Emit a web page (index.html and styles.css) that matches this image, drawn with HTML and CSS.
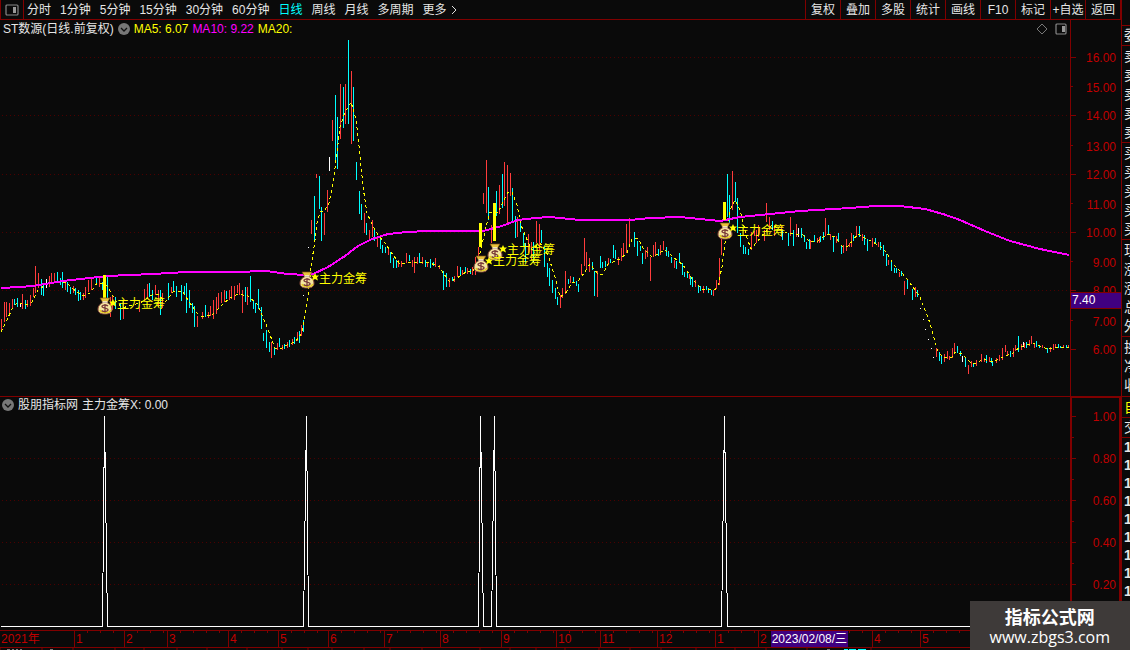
FILE: index.html
```html
<!DOCTYPE html>
<html lang="zh-CN">
<head>
<meta charset="utf-8">
<title>ST数源 日线</title>
<link rel="stylesheet" href="styles.css">
</head>
<body>
<div class="terminal">
  <main class="main">
    <header class="topbar">
      <button class="layout-btn" aria-label="布局"><svg width="14" height="12" viewBox="0 0 14 12"><rect x="1" y="1" width="12" height="10" rx="1" fill="none" stroke="#888" stroke-width="1.2"/><rect x="8" y="3" width="3" height="6" fill="#999"/></svg></button>
      <nav class="periods">
        <button>分时</button><button>1分钟</button><button>5分钟</button><button>15分钟</button><button>30分钟</button><button>60分钟</button><button class="active">日线</button><button>周线</button><button>月线</button><button>多周期</button><button class="more">更多<svg width="7" height="10" viewBox="0 0 7 10"><path d="M1 1l4 4-4 4" fill="none" stroke="#ddd"/></svg></button>
      </nav>
      <nav class="tools">
        <button>复权</button><button>叠加</button><button>多股</button><button>统计</button><button>画线</button><button>F10</button><button>标记</button><button>+自选</button><button>返回</button>
      </nav>
    </header>

    <section class="panel">
      <div class="panel-head price-head">
        <div class="legend">
          <span>ST数源(日线.前复权)</span>
          <button class="fold" aria-label="展开"><svg width="12" height="12" viewBox="0 0 12 12"><circle cx="6" cy="6" r="6" fill="#777"/><path d="M3 5l3 3 3-3" fill="none" stroke="#111" stroke-width="1.3"/></svg></button>
          <span class="yellow">MA5: 6.07</span>
          <span class="magenta">MA10: 9.22</span>
          <span class="yellow">MA20:</span>
          <span class="head-icons">
            <svg width="12" height="12" viewBox="0 0 12 12"><path d="M6 1l5 5-5 5-5-5z" fill="none" stroke="#777"/></svg>
            <svg width="12" height="12" viewBox="0 0 12 12"><rect x="1" y="1" width="10" height="10" rx="1" fill="none" stroke="#888" stroke-width="1.2"/><rect x="7" y="3" width="3" height="6" fill="#999"/></svg>
          </span>
        </div>
        <div class="axis-stub"></div>
      </div>
      <svg class="chart" viewBox="0 38 1121 358" role="img" aria-label="K线图">
        <defs>
          <g id="bag">
            <path d="M-5-8h10l-3 5h-4z" fill="#e8c23c" stroke="#7a4a12" stroke-width=".7"/>
            <path d="M-2-3.500C-5-2-7 0-7 3 -7 7-4 8 0 8S7 7 7 3C7 0 5-2 2-3.500z" fill="#f5e6a0" stroke="#8a4b3a"/>
            <path d="M-5 4C-4 7 4 8 6 4" fill="none" stroke="#e6d020" stroke-width="1.500"/>
            <path d="M-2.500-4h5" stroke="#fff" stroke-width="1.200"/>
            <path d="M3 0C1-1.500-3-1.300-3 .6S3 1.800 3 3.700-1.500 6-3.300 4.400M0-2V6.500" fill="none" stroke="#7b3b3b" stroke-width="1.300"/>
            <path d="M8-7l1.200 2.600L12-4.500 10-2.500 11 .5 8-1 5 .5 6-2.500 4-4.500l2.800.1z" fill="#ff0"/>
          </g>
        </defs>
        <g class="grid"><path d="M2 57.500H1070M2 115.500H1070M2 174.500H1070M2 232.500H1070M2 290.500H1070M2 349.500H1070"/></g>
        <path class="candle up" d="M1 319V332M4 302V322M6 302V317M9 303V314M12 299V308M22 294V309M27 300V307M30 295V306M33 288V297M35 266V293M38 273V288M49 276V287M51 273V283M54 273V283M65 280V290M73 286V293M83 293V300M85 287V298M88 280V292M91 279V290M99 277V287M110 297V317M112 295V310M123 300V319M139 302V312M144 289V300M147 284V297M155 285V295M158 290V307M162 293V308M171 287V293M197 316V327M202 312V319M208 312V318M210 306V316M213 300V319M216 297V314M218 293V308M221 292V303M224 290V302M229 290V300M231 286V299M234 286V300M237 285V293M239 283V295M242 290V313M247 287V305M271 342V358M277 343V350M282 345V350M287 342V348M292 339V345M297 332V341M301 325V336M311 220V234M316 174V178M324 213V235M327 190V212M332 120V141M340 84V139M345 84V124M351 71V144M364 213V233M369 230V239M372 220V237M377 237V247M388 247V255M398 260V267M401 261V267M406 253V263M412 260V267M414 257V273M417 257V264M422 257V264M427 262V267M435 258V267M439 265V269M449 278V287M454 276V282M457 266V277M462 270V275M467 268V274M472 267V275M475 257V275M478 247V256M483 193V204M486 160V213M491 225V243M499 185V214M504 162V206M507 165V223M510 173V196M517 217V237M528 234V253M531 242V260M536 221V243M539 224V250M560 295V308M562 288V298M565 271V294M570 276V283M581 264V275M584 238V266M586 252V270M589 258V272M597 271V297M608 258V265M618 257V265M621 248V261M623 243V256M626 224V253M629 218V247M645 250V259M647 247V257M650 257V281M653 245V257M655 242V255M660 245V255M663 241V250M674 260V268M689 274V279M695 280V287M703 286V293M713 290V296M716 280V289M719 258V285M721 238V255M732 171V210M751 232V250M754 231V236M756 230V243M758 225V237M764 230V241M766 203V222M769 217V230M774 225V236M781 226V237M790 217V236M796 224V237M810 240V249M817 238V243M819 237V243M825 218V236M830 234V240M836 236V243M843 245V253M846 239V251M849 243V247M851 233V247M856 226V237M862 234V241M872 238V247M878 242V247M888 260V265M899 272V277M904 281V295M915 287V297M936 348V357M944 354V362M947 351V359M949 356V360M952 348V358M954 343V352M968 365V374M971 361V367M976 360V366M981 354V362M984 358V362M989 357V362M996 358V363M999 355V361M1002 348V360M1005 345V352M1007 351V356M1013 348V357M1015 345V351M1021 344V350M1024 343V348M1029 340V346M1031 336V344M1034 343V348M1042 345V348M1050 347V352M1053 344V350M1055 344V348M1063 345V348M1068 345V348"/>
        <path class="candle down" d="M14 299V305M17 298V307M25 300V309M41 279V295M43 283V296M57 272V282M60 278V285M62 272V288M67 282V292M70 287V294M75 288V295M78 290V301M80 292V300M96 278V285M102 282V290M107 277V298M115 297V309M120 303V320M149 283V297M152 290V300M160 290V315M168 283V300M173 281V292M176 286V297M181 285V301M184 286V295M186 283V313M189 290V308M192 303V313M194 306V327M205 305V317M226 291V299M245 287V302M250 276V302M253 300V309M255 303V313M258 289V309M261 307V329M263 333V341M266 330V348M269 342V352M274 347V355M279 338V347M284 344V349M289 340V347M294 337V344M299 331V343M303 320V332M314 196V242M319 176V209M321 207V241M335 95V160M337 117V169M343 87V128M348 40V124M353 87V141M356 162V180M359 191V214M361 204V220M366 223V235M374 229V241M380 236V249M382 245V253M385 247V253M390 252V263M393 258V268M396 260V268M409 255V261M419 253V263M425 260V267M430 259V268M433 262V266M443 271V290M446 273V287M452 277V281M460 267V276M465 267V273M470 269V274M488 187V220M496 191V216M502 174V208M512 188V221M515 216V238M520 219V232M523 233V247M525 243V263M533 242V262M541 230V243M544 247V267M547 263V277M549 268V286M552 280V293M555 288V299M557 297V305M568 279V284M573 277V282M576 281V286M578 284V292M592 262V270M594 271V296M600 256V268M602 262V268M605 261V267M610 259V263M613 245V258M615 250V259M634 232V247M637 241V256M640 246V251M642 253V264M658 249V256M666 247V256M668 251V257M671 257V263M676 261V269M679 253V262M682 263V275M684 272V277M687 271V278M690 277V285M692 277V287M698 286V293M700 286V291M706 286V290M708 288V293M711 290V295M727 174V217M729 195V223M735 182V202M737 198V233M740 233V247M743 245V254M745 247V254M748 249V255M772 221V230M782 230V240M788 233V246M793 230V246M801 228V238M804 235V242M806 242V249M809 239V249M814 235V242M820 236V242M823 232V240M828 225V235M833 237V252M838 233V242M841 245V254M853 235V241M859 226V237M864 235V245M867 239V251M875 238V244M880 242V250M883 245V256M886 254V266M891 260V271M894 268V273M896 268V273M901 271V276M907 280V289M912 289V300M917 290V297M939 352V361M941 355V364M957 346V353M960 351V356M965 357V367M973 364V367M986 355V363M991 358V363M992 361V366M1010 351V357M1018 336V352M1026 342V348M1036 341V347M1039 345V348M1047 348V353M1058 344V348M1060 346V348M1066 345V348"/>
        <path class="candle flat" d="M20 303V307M46 279V288M329 157V171M798 228V237M308 247V248M303 295V296M920 308V309M923 319V320M925 329V330M928 339V340M931 348V349M933 357V358M962 356V362M1023 342V347"/>
        <polyline class="ma-fast" points="1,332 7,320 13,307 17,303 27,305 32,302 38,290 47,284 58,281 67,283 73,289 83,296 90,293 97,283 103,283 108,287 115,300 122,308 140,303 152,295 158,294 165,302 173,292 182,291 190,303 197,313 202,317 212,315 220,307 230,298 238,294 248,296 258,305 267,327 275,348 282,348 287,345 295,342 302,333 308,297 311,267 315,240 317,223 320,212 325,210 329,203 333,183 337,153 340,127 345,112 351,102 356,119 360,155 363,187 367,213 372,224 378,235 385,243 393,255 400,264 407,263 417,262 430,263 440,267 443,273 450,282 462,275 467,271 472,272 475,268 480,253 487,223 490,212 498,213 503,202 508,192 512,192 517,205 521,225 528,242 532,250 540,243 548,255 555,277 560,297 565,294 572,283 578,281 585,272 590,264 598,274 603,274 608,264 620,259 627,253 632,239 638,238 643,248 652,257 665,250 673,257 683,265 693,280 702,289 715,290 718,285 722,267 725,243 727,227 730,210 735,200 740,210 743,222 747,238 751,249 757,242 765,232 772,225 787,233 803,235 810,242 818,241 827,234 835,237 842,246 848,246 858,234 867,239 880,246 887,253 893,264 902,273 910,283 920,297 928,318 930,323 935,342 938,352 943,357 952,357 955,352 962,354 970,362 976,364 983,359 993,362 1003,357 1013,353 1020,347 1033,343 1047,349 1060,347 1069,347"/>
        <polyline class="ma-slow" points="1,288 20,287 33,286 63,281 90,278 107,276 153,274 187,272 233,272 267,271 287,274 306,275 313,274 328,267 345,256 358,246 372,239 388,234 407,232 428,231 483,231 502,226 518,220 535,218 550,217 580,220 630,220 650,218 680,217 700,219 720,221 740,217 760,215 800,211 850,208 875,206 900,206 925,209 943,214 960,220 985,231 1010,241 1040,249 1069,255"/>
        <path class="signal" d="M104.500 275V298M480.500 223V247M494.500 203V241M724.500 202V220"/>
        <use href="#bag" x="105" y="306"/><use href="#bag" x="307" y="280"/><use href="#bag" x="495" y="252"/><use href="#bag" x="481" y="264"/><use href="#bag" x="725" y="231"/>
        <g class="signal-text">
          <text x="117" y="308">主力金筹</text><text x="319" y="283">主力金筹</text><text x="507" y="254">主力金筹</text><text x="493" y="265">主力金筹</text><text x="737" y="235">主力金筹</text>
        </g>
        <path class="rule" d="M1070.500 38V396M1071 57.500h5M1071 86.500h2M1071 115.500h5M1071 145.500h2M1071 174.500h5M1071 203.500h2M1071 232.500h5M1071 261.500h2M1071 290.500h5M1071 320.500h2M1071 349.500h5"/>
        <g class="scale">
          <text x="1116" y="62">16.00</text><text x="1116" y="92">15.00</text><text x="1116" y="120">14.00</text><text x="1116" y="151">13.00</text><text x="1116" y="179">12.00</text><text x="1116" y="209">11.00</text><text x="1116" y="237">10.00</text><text x="1116" y="267">9.00</text><text x="1116" y="295">8.00</text><text x="1116" y="326">7.00</text><text x="1116" y="354">6.00</text>
        </g>
        <rect x="1071" y="292" width="50" height="17" fill="#400080"/>
        <path class="rule" d="M1071 292.500h50M1071 308.500h50"/>
        <text class="cursor-price" x="1072" y="304">7.40</text>
      </svg>
    </section>

    <section class="panel lower">
      <div class="panel-head">
        <div class="legend">
          <button class="fold" aria-label="展开"><svg width="12" height="12" viewBox="0 0 12 12"><circle cx="6" cy="6" r="6" fill="#777"/><path d="M3 5l3 3 3-3" fill="none" stroke="#111" stroke-width="1.3"/></svg></button>
          <span>股朋指标网</span>
          <span>主力金筹X: 0.00</span>
        </div>
        <div class="axis-stub thick"></div>
      </div>
      <svg class="chart" viewBox="0 413 1121 217" role="img" aria-label="主力金筹指标">
        <g class="grid"><path d="M2 458.500H1070M2 500.500H1070M2 542.500H1070M2 584.500H1070"/></g>
        <path class="spikes" d="M1 626.500H102.500L104.500 416.500L107.500 626.500H303.500L306.500 416.500L308.500 626.500H478.500L480.500 416.500L483.500 626.500H491.500L494.500 416.500L496.500 626.500H721.500L724.500 416.500L727.500 626.500H1070"/>
        <path class="rule" d="M1072 416.500h4M1072 437.500h2M1072 458.500h4M1072 479.500h2M1072 500.500h4M1072 521.500h2M1072 542.500h4M1072 563.500h2M1072 584.500h4"/>
        <path class="rule wide" d="M1071 413V630M1120 413V630"/>
        <g class="scale">
          <text x="1116" y="421">1.00</text><text x="1116" y="463">0.80</text><text x="1116" y="505">0.60</text><text x="1116" y="547">0.40</text><text x="1116" y="589">0.20</text>
        </g>
      </svg>
    </section>

    <div class="months">
      <span class="year">2021年</span><span>1</span><span>2</span><span>3</span><span>4</span><span>5</span><span>6</span><span>7</span><span>8</span><span>9</span><span>10</span><span>11</span><span>12</span><span>1</span><span class="current">2<time datetime="2023-02-08">2023/02/08/三</time></span><span>4</span><span>5</span>
    </div>
    <div class="bottom-strip">
      <svg width="900" height="3" viewBox="0 0 900 3"><path d="M0 0v3M42 0v3M73 0v3M115 0v3M144 0v3M177 0v3M207 0v3M247 0v3M282 0v3M308 0v3M332 0v3M364 0v3M390 0v3M422 0v3M480 0v3M510 0v3M536 0v3M565 0v3M599 0v3M630 0v3M661 0v3M696 0v3M735 0v3M766 0v3M807 0v3M871 0v3" stroke="#800000"/><path d="M7 2h3M12 2h2M16 2h2M20 2h2M50 2h3M827 2h3" stroke="#eee"/><path d="M844 2h4M849 2h7M858 2h8" stroke="#0ff" stroke-width="2"/></svg>
    </div>
  </main>

  <aside class="quotes">
    <div class="group first"><span>委</span></div>
    <div class="group"><span>卖</span><span>卖</span><span>卖</span><span>卖</span><span>卖</span></div>
    <div class="group"><span>买</span><span>买</span><span>买</span><span>买</span><span>买</span></div>
    <div class="group"><span>现</span><span>涨</span><span>涨</span><span>总</span><span>外</span></div>
    <div class="group wide-rows"><span>换</span><span>净</span><span>收</span></div>
    <div class="group yellow"><span>自</span></div>
    <div class="group first"><span>交</span></div>
    <div class="group ticks"><span>1</span><span>1</span><span>1</span><span>1</span><span>1</span><span>1</span><span>1</span><span>1</span><span>1</span></div>
  </aside>

  <div class="watermark"><strong>指标公式网</strong><span>www.zbgs3.com</span></div>
</div>
</body>
</html>
```
FILE: styles.css
```css
:root {
  --line: #800000;
  --bg: #0a0a0a;
}
* { box-sizing: border-box; }
body {
  margin: 0;
  background: var(--bg);
  color: #e6e6e6;
  font: 12px/16px "Liberation Sans", "Noto Sans CJK SC", sans-serif;
}
button {
  margin: 0;
  padding: 0;
  border: 0;
  background: none;
  color: inherit;
  font: inherit;
  white-space: nowrap;
}
svg { display: block; }
.terminal {
  position: relative;
  display: flex;
  min-height: 100vh;
  overflow: hidden;
}
.main {
  flex: 1;
  min-width: 0;
  display: flex;
  flex-direction: column;
}

.topbar {
  display: flex;
  height: 20px;
  border-bottom: 1px solid var(--line);
}
.layout-btn {
  display: grid;
  place-items: center;
  width: 24px;
  border: solid var(--line);
  border-width: 0 1px;
}
.periods {
  flex: 1;
  display: flex;
  gap: 9px;
  padding-left: 3px;
}
.more { display: flex; align-items: center; gap: 4px; }
.active { color: #00ffff; }
.tools {
  display: grid;
  grid-template-columns: repeat(9, 35px);
  border-right: 1px solid var(--line);
}
.tools button { border-left: 1px solid var(--line); }

.panel { border-bottom: 1px solid var(--line); }
.panel-head {
  display: flex;
  height: 16px;
}
.price-head { height: 18px; }
.legend {
  flex: 1;
  display: flex;
  align-items: center;
  gap: 4px;
  padding-left: 3px;
}
.lower .legend { padding-left: 2px; }
.head-icons {
  display: flex;
  gap: 7px;
  margin-left: auto;
  padding-right: 3px;
}
.axis-stub { width: 51px; border-left: 1px solid var(--line); }
.axis-stub.thick {
  border: solid var(--line);
  border-width: 1px 2px 0;
}
.yellow { color: #ffff00; }
.magenta { color: #ff00ff; }

.chart { width: 100%; overflow: visible; }
.grid path {
  stroke: #4c0000;
  stroke-dasharray: 1 3;
  shape-rendering: crispEdges;
}
.candle {
  fill: none;
  stroke-width: 1;
  shape-rendering: crispEdges;
  transform: translate(0.5px, 0);
}
.up { stroke: #ff3c3c; }
.down { stroke: #00ffff; }
.flat { stroke: #ffffff; }
.ma-fast {
  fill: none;
  stroke: #ffff00;
  stroke-dasharray: 3 3;
  shape-rendering: crispEdges;
}
.ma-slow {
  fill: none;
  stroke: #ff00ff;
  stroke-width: 2;
  shape-rendering: crispEdges;
}
.signal { stroke: #ffff00; stroke-width: 3; }
.signal-text { fill: #ffff00; }
.rule { fill: none; stroke: var(--line); }
.wide { stroke-width: 2; }
.scale { fill: #c00000; text-anchor: end; }
.cursor-price { fill: #ffffff; }
.spikes { fill: none; stroke: #ffffff; shape-rendering: crispEdges; }

.months {
  display: grid;
  grid-template-columns: 74fr 50fr 43fr 61fr 50fr 50fr 56fr 56fr 61fr 55fr 44fr 57fr 58fr 43fr 114fr 48fr 201fr;
  height: 17px;
  border-bottom: 1px solid var(--line);
  color: #c00000;
}
.months > span {
  min-width: 0;
  padding-left: 1px;
  border-left: 1px solid var(--line);
  white-space: nowrap;
  background: repeating-linear-gradient(90deg, transparent 0 12px, var(--line) 12px 13px) top / 100% 2px no-repeat;
}
.months .year { border-left: 0; background: none; }
.months .current { display: flex; gap: 4px; }
.current time {
  padding: 0 1px;
  background: #400080;
  color: #ffffff;
}
.bottom-strip {
  flex: 1;
  overflow: hidden;
}

.quotes {
  width: 9px;
  overflow: hidden;
  border-left: 1px solid var(--line);
  padding-top: 25px;
  font-size: 14px;
}
.group {
  border-top: 1px solid var(--line);
  padding: 1px 0 0 2px;
}
.group span {
  display: block;
  line-height: 19px;
  white-space: nowrap;
}
.group.first { padding-top: 0; }
.group.wide-rows { padding-bottom: 1px; }
.group.ticks { padding-top: 0; font-weight: bold; }
.group.ticks span { line-height: 18px; }

.watermark {
  position: absolute;
  right: 0;
  bottom: 0;
  display: flex;
  flex-direction: column;
  align-items: center;
  padding: 4px 20px;
  background: #3e3a39;
  color: #ffffff;
}
.watermark strong { font: bold 18px/22px "Noto Sans CJK SC", sans-serif; }
.watermark span { font: 16px/20px "Open Sans", "Noto Sans", sans-serif; }
```
